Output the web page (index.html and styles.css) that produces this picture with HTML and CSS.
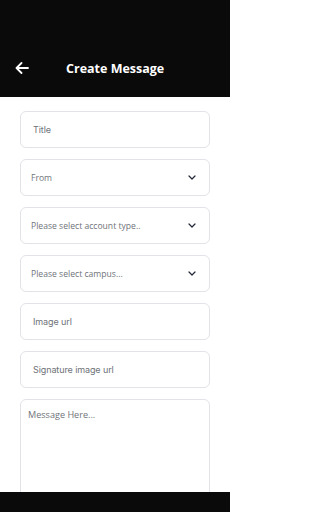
FILE: index.html
```html
<!DOCTYPE html>
<html lang="en">
<head>
<meta charset="utf-8">
<meta name="viewport" content="width=device-width, initial-scale=1">
<link rel="stylesheet" href="styles.css">
</head>
<body>
<div class="app">
<header class="appbar">
  <div class="appbar-row">
    <svg class="back" width="14" height="12" viewBox="0 0 14 12"><path d="M13 6H1.5M6.5 1L1.5 6l5 5" fill="none" stroke="#fff" stroke-width="1.8" stroke-linecap="round" stroke-linejoin="round"/></svg>
    <span class="title">Create Message</span>
  </div>
</header>
<main class="form">
  <div class="field"><span class="ph inter">Title</span></div>
  <div class="field select"><span class="ph">From</span><svg class="chev" width="8" height="5" viewBox="0 0 8 5"><path d="M1 1l3 3 3-3" fill="none" stroke="#1e2638" stroke-width="1.2" stroke-linecap="round" stroke-linejoin="round"/></svg></div>
  <div class="field select"><span class="ph">Please select account type..</span><svg class="chev" width="8" height="5" viewBox="0 0 8 5"><path d="M1 1l3 3 3-3" fill="none" stroke="#1e2638" stroke-width="1.2" stroke-linecap="round" stroke-linejoin="round"/></svg></div>
  <div class="field select"><span class="ph">Please select campus...</span><svg class="chev" width="8" height="5" viewBox="0 0 8 5"><path d="M1 1l3 3 3-3" fill="none" stroke="#1e2638" stroke-width="1.2" stroke-linecap="round" stroke-linejoin="round"/></svg></div>
  <div class="field"><span class="ph inter">Image url</span></div>
  <div class="field"><span class="ph inter">Signature image url</span></div>
  <div class="field area"><span class="ph msg">Message Here...</span></div>
</main>
<div class="navbar"></div>
</div>
</body>
</html>
```
FILE: styles.css
```css
html, body {
  margin: 0;
  padding: 0;
  background: #ffffff;
  font-family: "Open Sans", "Noto Sans", sans-serif;
}
.app {
  width: 230px;
  height: 512px;
  overflow: hidden;
  position: relative;
}
.appbar {
  background: #0a0a0a;
  height: 97px;
  box-sizing: border-box;
  padding-top: 56px;
}
.appbar-row {
  display: flex;
  align-items: center;
  height: 24px;
  padding-left: 15px;
}
.back {
  display: block;
}
.title {
  color: #ffffff;
  font-weight: 700;
  font-size: 12.5px;
  margin-left: 37px;
}
.form {
  display: flex;
  flex-direction: column;
  gap: 11px;
  padding: 14px 20px 0;
}
.field {
  height: 37px;
  box-sizing: border-box;
  border: 1px solid #e1e3e8;
  border-radius: 6px;
  display: flex;
  align-items: center;
  padding: 0 13px 0 10px;
}
.field.select {
  justify-content: space-between;
}
.ph {
  color: #6f7379;
  font-size: 8.6px;
}
.ph.inter {
  font-family: Inter, "Open Sans", sans-serif;
  font-size: 9px;
  padding-left: 2px;
  letter-spacing: -0.1px;
}
.ph.msg {
  font-size: 9.1px;
}
.chev {
  display: block;
}
.field.area {
  height: 110px;
  align-items: flex-start;
  padding: 8px 7px;
}
.navbar {
  position: absolute;
  left: 0;
  right: 0;
  bottom: 0;
  height: 20px;
  background: #0a0a0a;
}
```
